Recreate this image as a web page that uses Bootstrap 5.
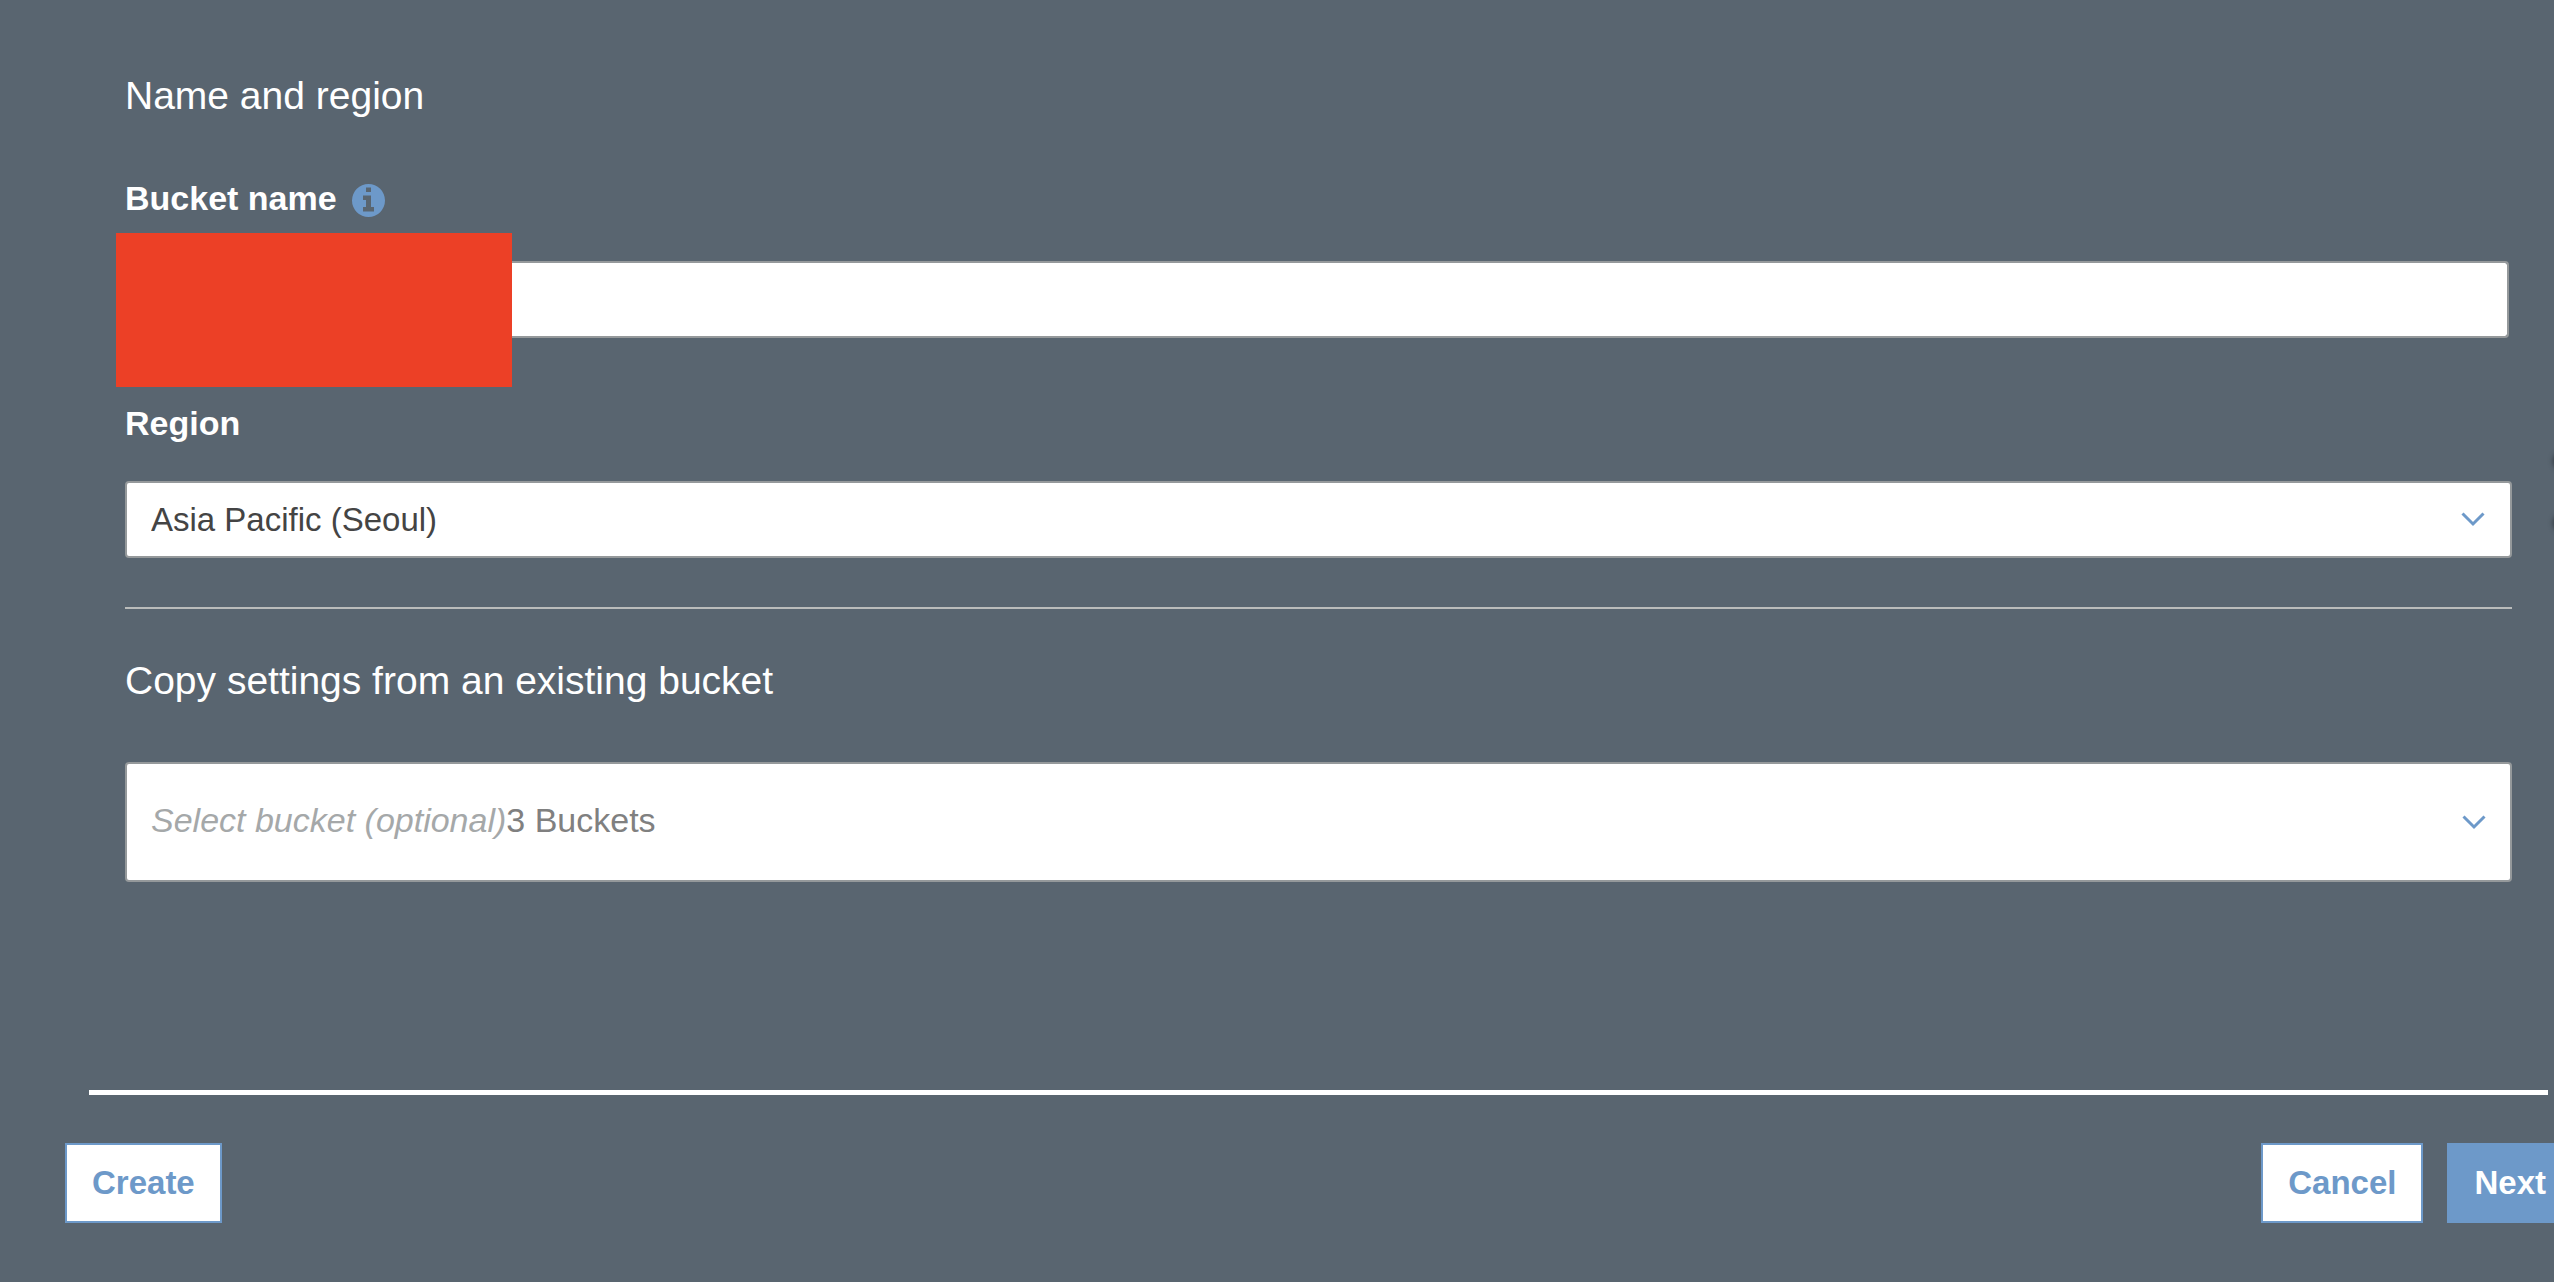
<!DOCTYPE html>
<html lang="en">
<head>
<meta charset="utf-8">
<meta name="viewport" content="width=device-width, initial-scale=1">
<title>Create bucket</title>
<link href="https://cdn.jsdelivr.net/npm/bootstrap@5.3.0/dist/css/bootstrap.min.css" rel="stylesheet">
<style>
  :root { --accent: #6d99c9; --line: #95999b; }
  body { background: #596570; color: #fff; font-family: "Liberation Sans", Arial, sans-serif; font-size: 34px; line-height: 40px; }
  .wizard { padding-top: 72px; overflow: hidden; min-height: 100vh; }
  .wizard-body { padding: 0 42px 0 125px; }
  .section-title { font-size: 39px; line-height: 48px; font-weight: 400; margin: 0; }
  .field-label { font-size: 34px; line-height: 40px; font-weight: 700; }
  .name-row { margin-top: 58px; margin-bottom: 43px; gap: 15px; }
  .info-btn { width: 33px; height: 33px; margin-top: 4px; color: var(--accent); }
  .info-btn svg { display: block; }
  .field, .field:focus { background-color: #fff; border: 2px solid var(--line); border-radius: 4px; color: #444; font-size: 34px; line-height: 40px; height: 77px; padding: 0 24px; }
  .name-field { margin-right: 3px; }
  .redaction { left: -9px; top: -28px; width: 396px; height: 154px; background: #ec4026; }
  .region-label { margin-top: 65px; margin-bottom: 38px; }
  .region-field, .region-field:focus { font-size: 33px; background-image: url("data:image/svg+xml,%3Csvg xmlns='http://www.w3.org/2000/svg' viewBox='0 0 24 15'%3E%3Cpath d='M1.5 1.5 12 12 22.500 1.5' fill='none' stroke='%236d99c9' stroke-width='3'/%3E%3C/svg%3E"); background-size: 24px 15px; background-position: right 25px center; }
  .divider { border-top: 2px solid #babcbb; opacity: 1; margin: 49px 0 48px; }
  .copy-field, .copy-field:focus { height: 120px; margin-top: 57px; }
  .copy-text { padding-bottom: 4px; }
  .hint { color: #a5a8a9; }
  .count { color: #808080; }
  .wizard-footer { margin-top: 208px; }
  .footer-line { border-top: 5px solid #fff; opacity: 1; margin: 0 6px 48px 89px; }
  .actions { padding-left: 65px; margin-right: -19px; gap: 24px; }
  .action { font-size: 33px; line-height: 40px; font-weight: 700; border: 2px solid var(--accent); border-radius: 0; padding: 18px 25px; background: #fff; color: var(--accent); }
  .action-next { background: var(--accent); color: #fff; }
  .edge-dot { right: -16px; width: 16px; height: 16px; border-radius: 50%; background: #333b43; box-shadow: 0 0 5px 1px #333b43; }
  .dot-a { top: 453px; }
  .dot-b { top: 515px; }
</style>
</head>
<body>
<form class="wizard position-relative">
  <main class="wizard-body">
    <h1 class="section-title">Name and region</h1>
    <div class="name-row d-flex align-items-center">
      <label class="field-label" for="bucket-name">Bucket name</label>
      <button type="button" class="info-btn btn p-0 border-0" aria-label="About bucket names">
        <svg width="33" height="33" viewBox="0 0 33 33" aria-hidden="true"><path fill="currentColor" fill-rule="evenodd" d="M16.500 0a16.500 16.500 0 1 0 0 33 16.500 16.500 0 0 0 0-33zM14 3.500h5v4.500h-5zM11 11.500h8v11.500h3v4.500H11V23h3v-7h-3z"/></svg>
      </button>
    </div>
    <div class="name-field position-relative">
      <input type="text" class="field form-control" id="bucket-name">
      <div class="redaction position-absolute"></div>
    </div>
    <label class="field-label region-label d-block" for="region">Region</label>
    <select class="field region-field form-select" id="region">
      <option selected>Asia Pacific (Seoul)</option>
    </select>
    <hr class="divider">
    <h2 class="section-title" id="copy-title">Copy settings from an existing bucket</h2>
    <button type="button" class="field copy-field btn w-100 d-flex align-items-center justify-content-between" aria-labelledby="copy-title">
      <span class="copy-text"><em class="hint">Select bucket (optional)</em><span class="count">3 Buckets</span></span>
      <svg width="24" height="15" viewBox="0 0 24 15" aria-hidden="true"><path d="M1.500 1.500 12 12 22.500 1.500" fill="none" stroke="#6d99c9" stroke-width="3"/></svg>
    </button>
  </main>
  <footer class="wizard-footer">
    <hr class="footer-line">
    <div class="actions d-flex">
      <button type="submit" class="action btn me-auto">Create</button>
      <button type="button" class="action btn">Cancel</button>
      <button type="button" class="action action-next btn">Next</button>
    </div>
  </footer>
  <span class="edge-dot dot-a position-absolute"></span>
  <span class="edge-dot dot-b position-absolute"></span>
</form>
<script src="https://cdn.jsdelivr.net/npm/bootstrap@5.3.0/dist/js/bootstrap.bundle.min.js"></script>
</body>
</html>
